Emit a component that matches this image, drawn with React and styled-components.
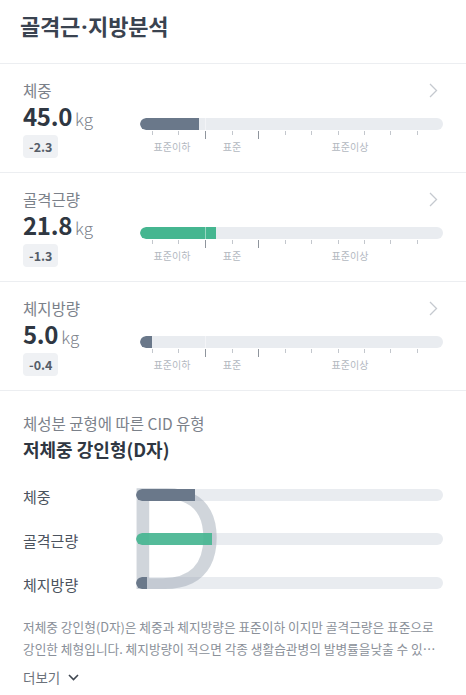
import React from "react";
import styled, { createGlobalStyle } from "styled-components";

const GlobalStyle = createGlobalStyle`
  html, body { margin: 0; padding: 0; background: #ffffff; }
  body {
    font-family: "Noto Sans CJK KR", "Noto Sans", sans-serif;
    -webkit-font-smoothing: antialiased;
  }
  * { box-sizing: border-box; }
`;

const Page = styled.div`
  width: 466px;
  background: #fff;
`;

const Header = styled.header`
  height: 64px;
  padding: 10px 20px 0;
  border-bottom: 1px solid #eceef1;
`;

const Title = styled.h1`
  margin: 0;
  font-size: 22px;
  line-height: 30px;
  font-weight: 700;
  color: #3a4350;
  letter-spacing: -0.2px;
`;

const Dot = styled.span`
  font-family: "Noto Sans", sans-serif;
  margin: 0 1px;
`;

const MetricSection = styled.section`
  padding: 15px 23px 14px;
  border-bottom: 1px solid #eceef1;
`;

const TopRow = styled.div`
  display: flex;
  justify-content: space-between;
  align-items: center;
  height: 22px;
`;

const MetricLabel = styled.span`
  font-size: 15.5px;
  line-height: 22px;
  color: #7b818a;
`;

const Chevron = styled.svg`
  width: 9px;
  height: 15px;
  margin-right: 5px;
`;

const Body = styled.div`
  display: flex;
`;

const LeftCol = styled.div`
  width: 117px;
  display: flex;
  flex-direction: column;
  align-items: flex-start;
`;

const Value = styled.div`
  display: flex;
  align-items: baseline;
  line-height: 30px;
  height: 30px;
`;

const Number = styled.span`
  font-size: 24px;
  font-weight: 700;
  color: #2f3742;
  letter-spacing: -0.3px;
`;

const Unit = styled.span`
  font-size: 17px;
  font-weight: 300;
  color: #7b818a;
  margin-left: 3px;
`;

const Badge = styled.span`
  margin-top: 4px;
  height: 23px;
  padding: 0 6px;
  border-radius: 4px;
  background: #eff1f4;
  font-size: 12.5px;
  font-weight: 600;
  line-height: 23px;
  color: #555d68;
`;

const RightCol = styled.div`
  flex: 1;
  padding-top: 17px;
`;

const Track = styled.div`
  position: relative;
  height: 12px;
  border-radius: 6px;
  background: #e9ecf0;
  overflow: hidden;
`;

const Fill = styled.div`
  position: relative;
  z-index: 2;
  height: 100%;
  border-radius: 6px 0 0 6px;
  background: ${(p) => p.$color};
  opacity: ${(p) => p.$opacity || 1};
`;

const Marker = styled.div`
  position: absolute;
  z-index: 3;
  top: 0;
  bottom: 0;
  width: 1px;
  background: rgba(255, 255, 255, 0.45);
`;

const Ticks = styled.div`
  position: relative;
  height: 10px;
`;

const Tick = styled.span`
  position: absolute;
  top: 1px;
  width: 1px;
  height: ${(p) => (p.$major ? 8 : 4)}px;
  background: ${(p) => (p.$major ? "#8f959d" : "#c3c7cd")};
`;

const ScaleLabels = styled.div`
  position: relative;
  height: 14px;
`;

const ScaleLabel = styled.span`
  position: absolute;
  top: 0;
  transform: translateX(-50%);
  font-size: 10px;
  line-height: 14px;
  color: #b3b8bf;
  white-space: nowrap;
`;

const CidSection = styled.section`
  padding: 21px 23px 0;
`;

const CidLabel = styled.div`
  font-size: 15.5px;
  line-height: 22px;
  color: #7b818a;
`;

const CidTitle = styled.div`
  margin-top: 2px;
  font-size: 18px;
  line-height: 26px;
  font-weight: 700;
  color: #2f3742;
`;

const Rows = styled.div`
  position: relative;
  margin-top: 11px;
`;

const Row = styled.div`
  display: grid;
  grid-template-columns: 113px 1fr;
  align-items: center;
  height: 44px;
`;

const RowLabel = styled.span`
  font-size: 15px;
  line-height: 22px;
  color: #4b535e;
  padding-top: 3px;
`;

const RowTrack = styled.div`
  height: 12px;
  border-radius: 6px;
  background: #e9ecf0;
  overflow: hidden;
`;

const BigLetter = styled.span`
  position: absolute;
  z-index: 1;
  left: 100px;
  top: -8px;
  font-family: "Noto Sans", sans-serif;
  font-size: 140px;
  line-height: 1;
  font-weight: 400;
  color: rgba(150, 161, 176, 0.45);
  pointer-events: none;
`;

const Description = styled.p`
  margin: 11px 0 0;
  font-size: 12.7px;
  line-height: 22px;
  color: #8a9099;
  letter-spacing: 0;
  display: -webkit-box;
  -webkit-line-clamp: 2;
  -webkit-box-orient: vertical;
  overflow: hidden;
`;

const MoreButton = styled.button`
  margin-top: 6px;
  padding: 0;
  border: 0;
  background: none;
  display: flex;
  align-items: center;
  gap: 8px;
  font-family: inherit;
  font-size: 13.5px;
  line-height: 22px;
  color: #6b717a;
`;

const TICKS = [12, 38.5, 65, 91.5, 118, 144.5, 171, 197.5, 224, 250.5, 277];
const MAJOR = [65, 118];

const ChevronRight = () => (
  <Chevron viewBox="0 0 9 15" fill="none">
    <path d="M1 1l6.5 6.5L1 14" stroke="#c5c9cf" strokeWidth="1.3" />
  </Chevron>
);

const Scale = ({ percent, color }) => (
  <RightCol>
    <Track>
      <Fill $color={color} style={{ width: `${percent}%` }} />
      <Marker style={{ left: `${(65 / 303) * 100}%` }} />
    </Track>
    <Ticks>
      {TICKS.map((t) => (
        <Tick
          key={t}
          $major={MAJOR.includes(t)}
          style={{ left: `${(t / 303) * 100}%` }}
        />
      ))}
    </Ticks>
    <ScaleLabels>
      <ScaleLabel style={{ left: `${(32 / 303) * 100}%` }}>표준이하</ScaleLabel>
      <ScaleLabel style={{ left: `${(92 / 303) * 100}%` }}>표준</ScaleLabel>
      <ScaleLabel style={{ left: `${(210 / 303) * 100}%` }}>표준이상</ScaleLabel>
    </ScaleLabels>
  </RightCol>
);

const SLATE = "#6a788a";
const GREEN = "#45b690";

const metrics = [
  { label: "체중", value: "45.0", diff: "-2.3", percent: 19.5, color: SLATE },
  { label: "골격근량", value: "21.8", diff: "-1.3", percent: 25, color: GREEN },
  { label: "체지방량", value: "5.0", diff: "-0.4", percent: 4, color: SLATE },
];

const cidRows = [
  { label: "체중", percent: 19.2, color: SLATE },
  { label: "골격근량", percent: 24.8, color: GREEN, opacity: 0.9 },
  { label: "체지방량", percent: 3.6, color: SLATE },
];

export default function App() {
  return (
    <Page>
      <GlobalStyle />
      <Header>
        <Title>
          골격근<Dot>·</Dot>지방분석
        </Title>
      </Header>
      {metrics.map((m) => (
        <MetricSection key={m.label}>
          <TopRow>
            <MetricLabel>{m.label}</MetricLabel>
            <ChevronRight />
          </TopRow>
          <Body>
            <LeftCol>
              <Value>
                <Number>{m.value}</Number>
                <Unit>kg</Unit>
              </Value>
              <Badge>{m.diff}</Badge>
            </LeftCol>
            <Scale percent={m.percent} color={m.color} />
          </Body>
        </MetricSection>
      ))}
      <CidSection>
        <CidLabel>체성분 균형에 따른 CID 유형</CidLabel>
        <CidTitle>저체중 강인형(D자)</CidTitle>
        <Rows>
          <BigLetter>D</BigLetter>
          {cidRows.map((r) => (
            <Row key={r.label}>
              <RowLabel>{r.label}</RowLabel>
              <RowTrack>
                <Fill
                  $color={r.color}
                  $opacity={r.opacity}
                  style={{ width: `${r.percent}%` }}
                />
              </RowTrack>
            </Row>
          ))}
        </Rows>
        <Description>
          저체중 강인형(D자)은 체중과 체지방량은 표준이하 이지만 골격근량은 표준으로
          강인한 체형입니다. 체지방량이 적으면 각종 생활습관병의 발병률을낮출 수
          있습니다. 다만 체중이 너무 적으면 면역력이 떨어질 수 있습니다.
        </Description>
        <MoreButton>
          더보기
          <svg width="11" height="7" viewBox="0 0 11 7" fill="none">
            <path d="M1 1l4.5 4.5L10 1" stroke="#3f4650" strokeWidth="1.6" />
          </svg>
        </MoreButton>
      </CidSection>
    </Page>
  );
}
